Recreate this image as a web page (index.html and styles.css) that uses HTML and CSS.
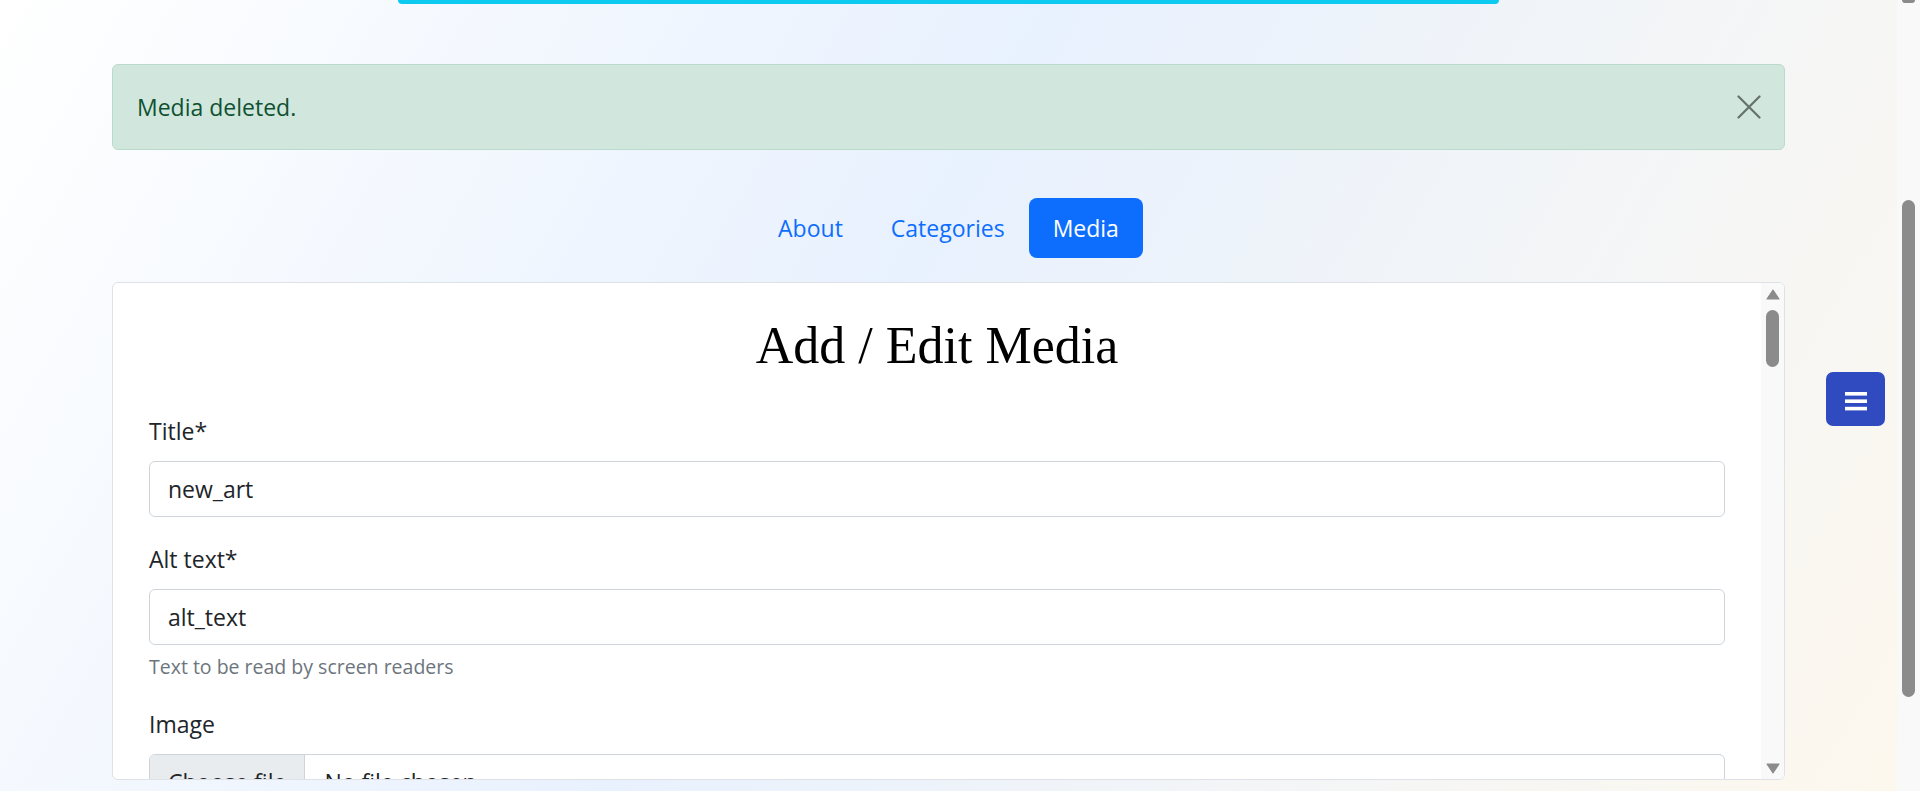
FILE: index.html
```html
<!DOCTYPE html>
<html lang="en">
<head>
<meta charset="utf-8">
<title>Add / Edit Media</title>
<link rel="stylesheet" href="styles.css">
</head>
<body>
<div class="page">
  <div class="topbar"></div>
  <main class="container">
    <div class="alert" role="alert">
      <span>Media deleted.</span>
      <button class="btn-close" type="button" aria-label="Close">
        <svg viewBox="0 0 16 16" width="24" height="24"><path d="M1 1L15 15M15 1L1 15" stroke="#000" stroke-width="1.5" stroke-linecap="round" fill="none"/></svg>
      </button>
    </div>
    <ul class="nav">
      <li><a class="nav-link" href="#">About</a></li>
      <li><a class="nav-link" href="#">Categories</a></li>
      <li><a class="nav-link active" href="#">Media</a></li>
    </ul>
    <section class="card">
      <div class="card-body">
        <h2 class="card-title">Add / Edit Media</h2>
        <div class="field">
          <label class="label" for="title">Title*</label>
          <input class="form-control" id="title" type="text" value="new_art">
        </div>
        <div class="field">
          <label class="label" for="alt">Alt text*</label>
          <input class="form-control" id="alt" type="text" value="alt_text">
          <div class="form-text">Text to be read by screen readers</div>
        </div>
        <div class="field">
          <label class="label">Image</label>
          <div class="file-input">
            <span class="file-btn">Choose file</span>
            <span class="file-name">No file chosen</span>
          </div>
        </div>
      </div>
      <div class="card-scroll">
        <svg class="sb-arrow-up" viewBox="0 0 14 11" width="14" height="11"><path d="M7 1.2L13 10H1Z" fill="#8b8b8b" stroke="#8b8b8b" stroke-width="1.2" stroke-linejoin="round"/></svg>
        <div class="sb-thumb"></div>
        <div class="sb-space"></div>
        <svg class="sb-arrow-down" viewBox="0 0 14 11" width="14" height="11"><path d="M7 9.8L13 1H1Z" fill="#8b8b8b" stroke="#8b8b8b" stroke-width="1.2" stroke-linejoin="round"/></svg>
      </div>
    </section>
  </main>
</div>
<div class="vscroll">
  <div class="vscroll-top"></div>
  <div class="vscroll-thumb"></div>
</div>
<button class="menu-btn" type="button" aria-label="Menu">
  <svg viewBox="0 0 22 19" width="22" height="19"><rect x="0" y="0" width="22" height="3.6" fill="#fff"/><rect x="0" y="7.4" width="22" height="3.6" fill="#fff"/><rect x="0" y="14.8" width="22" height="3.6" fill="#fff"/></svg>
</button>
</body>
</html>
```
FILE: styles.css
```css
html, body {
  margin: 0;
  height: 791px;
  overflow: hidden;
}
body {
  display: flex;
  font-family: "Open Sans", "Noto Sans", sans-serif;
  font-size: 23px;
  color: #212529;
}
.page {
  flex: 1;
  min-width: 0;
  height: 791px;
  overflow: hidden;
  background: linear-gradient(120deg, #ffffff 0%, #e8f1fe 45%, #f3f5f7 72%, #fdf8ee 100%);
}
.topbar {
  width: 1101px;
  height: 4px;
  margin: 0 auto;
  background: #0dcaf0;
  border-radius: 0 0 5px 5px;
}
.container {
  width: 1673px;
  margin: 60px auto 0;
}
.alert {
  display: flex;
  align-items: center;
  justify-content: space-between;
  height: 86px;
  box-sizing: border-box;
  padding: 0 23px 0 24px;
  border: 1px solid #badbcc;
  border-radius: 6px;
  background: #d1e7dd;
  color: #0f5132;
  line-height: 36px;
}
.btn-close {
  display: block;
  width: 24px;
  height: 24px;
  padding: 0;
  border: 0;
  background: none;
  opacity: 0.5;
}
.btn-close svg { display: block; }
.nav {
  display: flex;
  justify-content: center;
  list-style: none;
  margin: 48px 0 0;
  padding: 0;
}
.nav-link {
  display: block;
  padding: 12px 24px;
  line-height: 36px;
  color: #0d6efd;
  text-decoration: none;
  border-radius: 8px;
}
.nav-link.active {
  background: #0d6efd;
  color: #fff;
}
.card {
  display: flex;
  margin-top: 24px;
  height: 498px;
  box-sizing: border-box;
  background: #fff;
  border: 1px solid #dee2e6;
  border-radius: 6px;
  overflow: hidden;
}
.card-body {
  flex: 1;
  min-width: 0;
  padding: 36px 36px 0;
}
.card-title {
  margin: 0 0 40px;
  font-family: "Liberation Serif", "Times New Roman", serif;
  font-weight: 400;
  font-size: 52px;
  line-height: 54px;
  text-align: center;
  color: #000;
}
.field {
  margin-bottom: 24px;
}
.label {
  display: block;
  line-height: 36px;
  margin-bottom: 12px;
}
.form-control {
  display: block;
  width: 100%;
  height: 56px;
  box-sizing: border-box;
  margin: 0;
  padding: 0 18px;
  border: 1px solid #ced4da;
  border-radius: 6px;
  background: #fff;
  font: inherit;
  color: #212529;
  outline: none;
}
.form-text {
  margin-top: 6px;
  font-size: 19.5px;
  line-height: 31px;
  color: #6c757d;
}
.file-input {
  display: flex;
  height: 56px;
  box-sizing: border-box;
  border: 1px solid #ced4da;
  border-radius: 6px;
  overflow: hidden;
  line-height: 54px;
}
.file-btn {
  padding: 0 18px;
  background: #e9ecef;
  border-right: 1px solid #ced4da;
}
.file-name {
  padding-left: 19px;
}
.card-scroll {
  flex: 0 0 23px;
  display: flex;
  flex-direction: column;
  align-items: center;
  background: #f9f9f9;
}
.sb-arrow-up {
  display: block;
  margin-top: 6px;
}
.sb-thumb {
  width: 13px;
  height: 57px;
  margin-top: 10px;
  border-radius: 7px;
  background: #8b8b8b;
}
.sb-space { flex: 1; }
.sb-arrow-down {
  display: block;
  margin-bottom: 5px;
}
.vscroll {
  flex: 0 0 23px;
  height: 791px;
  display: flex;
  flex-direction: column;
  align-items: center;
  background: #f9f9f9;
}
.vscroll-top {
  width: 13px;
  height: 3px;
  background: #8b8b8b;
  border-radius: 0 0 3px 3px;
}
.vscroll-thumb {
  width: 13px;
  height: 497px;
  margin-top: 197px;
  border-radius: 7px;
  background: #8b8b8b;
}
.menu-btn {
  position: fixed;
  top: 372px;
  right: 35px;
  width: 59px;
  height: 54px;
  padding: 4px 0 0;
  display: flex;
  align-items: center;
  justify-content: center;
  border: 0;
  border-radius: 7px;
  background: #304ac0;
}
.menu-btn svg { display: block; }
```
